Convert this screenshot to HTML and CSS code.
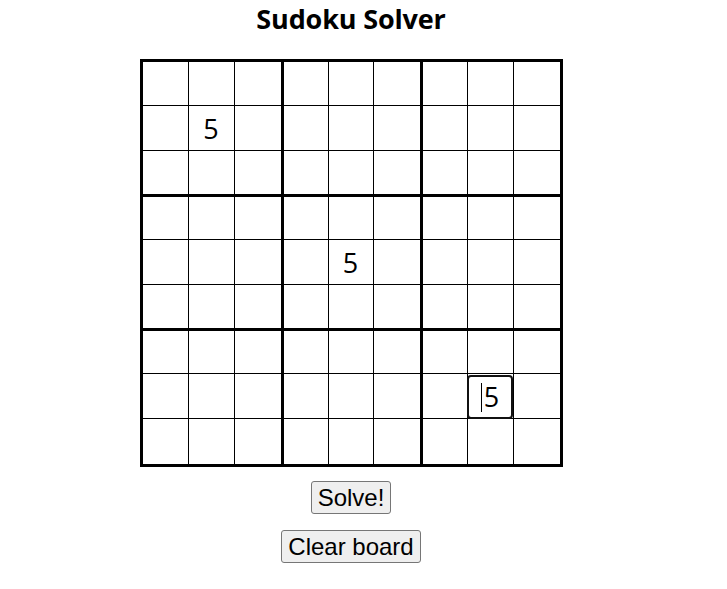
FILE: index.html
```html
<!DOCTYPE html>
<html lang="en">
<head>
<meta charset="utf-8">
<title>Sudoku Solver</title>
<link rel="stylesheet" href="styles.css">
</head>
<body>
<main class="app">
  <h1 class="title">Sudoku Solver</h1>
  <div class="board">
    <div class="cell"></div><div class="cell"></div><div class="cell"></div><div class="cell"></div><div class="cell"></div><div class="cell"></div><div class="cell"></div><div class="cell"></div><div class="cell"></div>
    <div class="cell"></div><div class="cell">5</div><div class="cell"></div><div class="cell"></div><div class="cell"></div><div class="cell"></div><div class="cell"></div><div class="cell"></div><div class="cell"></div>
    <div class="cell"></div><div class="cell"></div><div class="cell"></div><div class="cell"></div><div class="cell"></div><div class="cell"></div><div class="cell"></div><div class="cell"></div><div class="cell"></div>
    <div class="cell"></div><div class="cell"></div><div class="cell"></div><div class="cell"></div><div class="cell"></div><div class="cell"></div><div class="cell"></div><div class="cell"></div><div class="cell"></div>
    <div class="cell"></div><div class="cell"></div><div class="cell"></div><div class="cell"></div><div class="cell">5</div><div class="cell"></div><div class="cell"></div><div class="cell"></div><div class="cell"></div>
    <div class="cell"></div><div class="cell"></div><div class="cell"></div><div class="cell"></div><div class="cell"></div><div class="cell"></div><div class="cell"></div><div class="cell"></div><div class="cell"></div>
    <div class="cell"></div><div class="cell"></div><div class="cell"></div><div class="cell"></div><div class="cell"></div><div class="cell"></div><div class="cell"></div><div class="cell"></div><div class="cell"></div>
    <div class="cell"></div><div class="cell"></div><div class="cell"></div><div class="cell"></div><div class="cell"></div><div class="cell"></div><div class="cell"></div><div class="cell cell-focus"><span class="caret"></span>5</div><div class="cell"></div>
    <div class="cell"></div><div class="cell"></div><div class="cell"></div><div class="cell"></div><div class="cell"></div><div class="cell"></div><div class="cell"></div><div class="cell"></div><div class="cell"></div>
  </div>
  <button class="btn btn-solve" type="button">Solve!</button>
  <button class="btn btn-clear" type="button">Clear board</button>
</main>
</body>
</html>
```

FILE: styles.css
```css
html, body {
  margin: 0;
  padding: 0;
  background: #ffffff;
}

.app {
  width: 702px;
  display: flex;
  flex-direction: column;
  align-items: center;
  font-family: "Open Sans", "Liberation Sans", sans-serif;
  color: #000;
}

.title {
  margin: 0;
  padding-top: 1px;
  font-family: "Open Sans", sans-serif;
  font-weight: 700;
  font-size: 27px;
  line-height: 36px;
  letter-spacing: -0.15px;
  height: 59px;
  box-sizing: border-box;
}

.board {
  display: grid;
  grid-template-columns: 46px 46px 49px 45px 45px 49px 45px 46px 46px;
  grid-template-rows: 44px 45px 46px 43px 45px 46px 43px 45px 45px;
  border: 3px solid #000;
}

.cell {
  box-sizing: border-box;
  border-right: 1px solid #000;
  border-bottom: 1px solid #000;
  display: flex;
  align-items: center;
  justify-content: center;
  font-family: "Open Sans", sans-serif;
  font-size: 27px;
  line-height: 1;
  position: relative;
}

.cell:nth-child(9n+3),
.cell:nth-child(9n+6) {
  border-right-width: 3px;
}

.cell:nth-child(9n) {
  border-right: 0;
}

.cell:nth-child(n+19):nth-child(-n+27),
.cell:nth-child(n+46):nth-child(-n+54) {
  border-bottom-width: 3px;
}

.cell:nth-child(n+73) {
  border-bottom: 0;
}

.cell-focus::after {
  content: "";
  position: absolute;
  top: 1px;
  right: 0;
  bottom: -1px;
  left: -1px;
  border: 2px solid #111;
  border-radius: 4px;
}

.caret {
  display: inline-block;
  width: 1px;
  height: 29px;
  background: #000;
  margin-right: 2px;
  margin-top: 2px;
}

.btn {
  font-family: "Liberation Sans", Arial, sans-serif;
  font-size: 24px;
  line-height: 27px;
  color: #000;
  background: #efefef;
  border: 1px solid #767676;
  border-radius: 3px;
  padding: 2px 6px;
  margin: 0;
}

.btn-solve {
  margin-top: 14px;
}

.btn-clear {
  margin-top: 16px;
}
```
